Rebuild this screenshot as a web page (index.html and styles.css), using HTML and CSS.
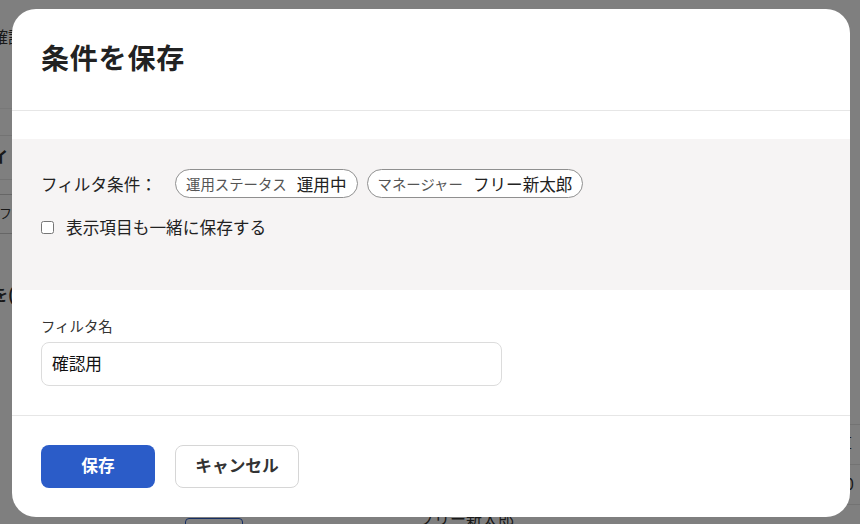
FILE: index.html
```html
<!DOCTYPE html>
<html lang="ja">
<head>
<meta charset="utf-8">
<title>条件を保存</title>
<link rel="stylesheet" href="styles.css">
</head>
<body>
<div class="page">
  <div class="pg-row pg-top">確認</div>
  <div class="pg-row pg-line">&nbsp;</div>
  <div class="pg-row pg-bold">イ</div>
  <div class="pg-row pg-box"><span>フス</span></div>
  <div class="pg-row pg-bold pg-mid">を(</div>
  <div class="pg-right">
    <div class="pg-cell">算</div>
    <div class="pg-cell">00</div>
  </div>
  <div class="pg-bottom"><span class="pg-btn"></span><span class="pg-name">フリー新太郎</span></div>
</div>

<div class="overlay">
  <div class="modal">
    <div class="modal-header">
      <h1 class="modal-title">条件を保存</h1>
    </div>
    <div class="modal-body">
      <div class="conditions">
        <div class="cond-row">
          <span class="cond-label">フィルタ条件：</span>
          <span class="chip"><span class="chip-key">運用ステータス</span><span class="chip-val">運用中</span></span>
          <span class="chip"><span class="chip-key">マネージャー</span><span class="chip-val">フリー新太郎</span></span>
        </div>
        <label class="check-row">
          <input type="checkbox" class="check">
          <span>表示項目も一緒に保存する</span>
        </label>
      </div>
      <div class="field">
        <div class="field-label">フィルタ名</div>
        <div class="field-input">確認用</div>
      </div>
    </div>
    <div class="modal-footer">
      <button class="btn btn-primary">保存</button>
      <button class="btn btn-secondary">キャンセル</button>
    </div>
  </div>
</div>
</body>
</html>
```

FILE: styles.css
```css
* { box-sizing: border-box; }
html, body {
  margin: 0;
  width: 860px;
  height: 524px;
  overflow: hidden;
}
body {
  font-family: "Noto Sans CJK JP", "Noto Sans", sans-serif;
  color: #222;
  background: #fff;
  position: relative;
}

/* background page (dimmed) */
.page {
  width: 860px;
  height: 524px;
  position: relative;
  font-size: 16px;
  color: #333;
}
.pg-row {
  margin-left: -8px;
  width: 120px;
}
.pg-top { padding-top: 24px; height: 108px; }
.pg-line { height: 28px; border-top: 1px solid #f0f0f0; border-bottom: 1px solid #e6e6e6; }
.pg-bold { font-weight: 700; height: 44px; line-height: 40px; border-bottom: 1px solid #e6e6e6; }
.pg-box { height: 40px; margin-top: 14px; border: 1px solid #ccc; font-size: 13px; line-height: 36px; padding-left: 6px; }
.pg-mid { margin-top: 40px; border-bottom: none; }
.pg-right {
  position: absolute;
  right: -16px;
  top: 424px;
  width: 40px;
  border-top: 1px solid #e6e6e6;
}
.pg-cell { height: 40px; line-height: 36px; border-bottom: 1px solid #e6e6e6; font-size: 16px; }
.pg-bottom {
  position: absolute;
  left: 185px;
  top: 518px;
  display: flex;
  gap: 175px;
  font-size: 16px;
}
.pg-btn { width: 58px; height: 20px; border: 1px solid #2b5dc9; border-radius: 4px; }
.pg-name { margin-top: -12px; }

/* overlay + modal */
.overlay {
  position: absolute;
  inset: 0;
  background: rgba(0, 0, 0, 0.5);
  padding: 9px 10px 7px 12px;
}
.modal {
  width: 838px;
  height: 508px;
  background: #fff;
  border-radius: 24px;
  overflow: hidden;
  display: flex;
  flex-direction: column;
}
.modal-header {
  height: 102px;
  padding: 28px 29px 0;
  border-bottom: 1px solid #e6e6e6;
}
.modal-title {
  margin: 0;
  font-size: 28px;
  letter-spacing: 0.8px;
  line-height: 40px;
  font-weight: 700;
  color: #222;
}
.modal-body {
  padding-top: 28px;
  border-bottom: 1px solid #e6e6e6;
}
.conditions {
  background: #f6f4f4;
  height: 151px;
  padding: 30px 29px 0;
  display: flex;
  flex-direction: column;
  gap: 17px;
}
.cond-row {
  display: flex;
  align-items: center;
  height: 29px;
}
.cond-label {
  font-size: 16.6px;
  width: 134px;
  color: #222;
}
.chip {
  display: inline-flex;
  align-items: center;
  gap: 10px;
  height: 29px;
  padding: 0 10px 0 10px;
  border: 1px solid #8f8f8f;
  border-radius: 15px;
  background: #fff;
  margin-right: 9px;
}
.chip-key { font-size: 14.4px; color: #555; }
.chip-val { font-size: 16.6px; color: #222; }
.check-row {
  display: flex;
  align-items: center;
  gap: 12px;
  height: 24px;
  font-size: 16.7px;
  color: #222;
}
.check {
  width: 13px;
  height: 13px;
  margin: 0;
}
.field {
  height: 125px;
  padding: 26px 29px 0;
}
.field-label {
  font-size: 14.4px;
  line-height: 20px;
  color: #333;
}
.field-input {
  margin-top: 6px;
  width: 461px;
  height: 44px;
  border: 1px solid #dcdcdc;
  border-radius: 8px;
  padding: 0 10px;
  font-size: 16.7px;
  line-height: 40px;
  color: #111;
}
.modal-footer {
  padding: 29px 29px 0;
  display: flex;
  gap: 20px;
}
.btn {
  height: 43px;
  padding: 0 0 3px;
  border-radius: 8px;
  font-family: "Noto Sans CJK JP", "Noto Sans", sans-serif;
  font-size: 16.7px;
  font-weight: 700;
  cursor: pointer;
}
.btn-primary {
  width: 114px;
  background: #2b5cc8;
  border: none;
  color: #fff;
}
.btn-secondary {
  width: 124px;
  background: #fff;
  border: 1px solid #d6d6d6;
  color: #333;
}
```
